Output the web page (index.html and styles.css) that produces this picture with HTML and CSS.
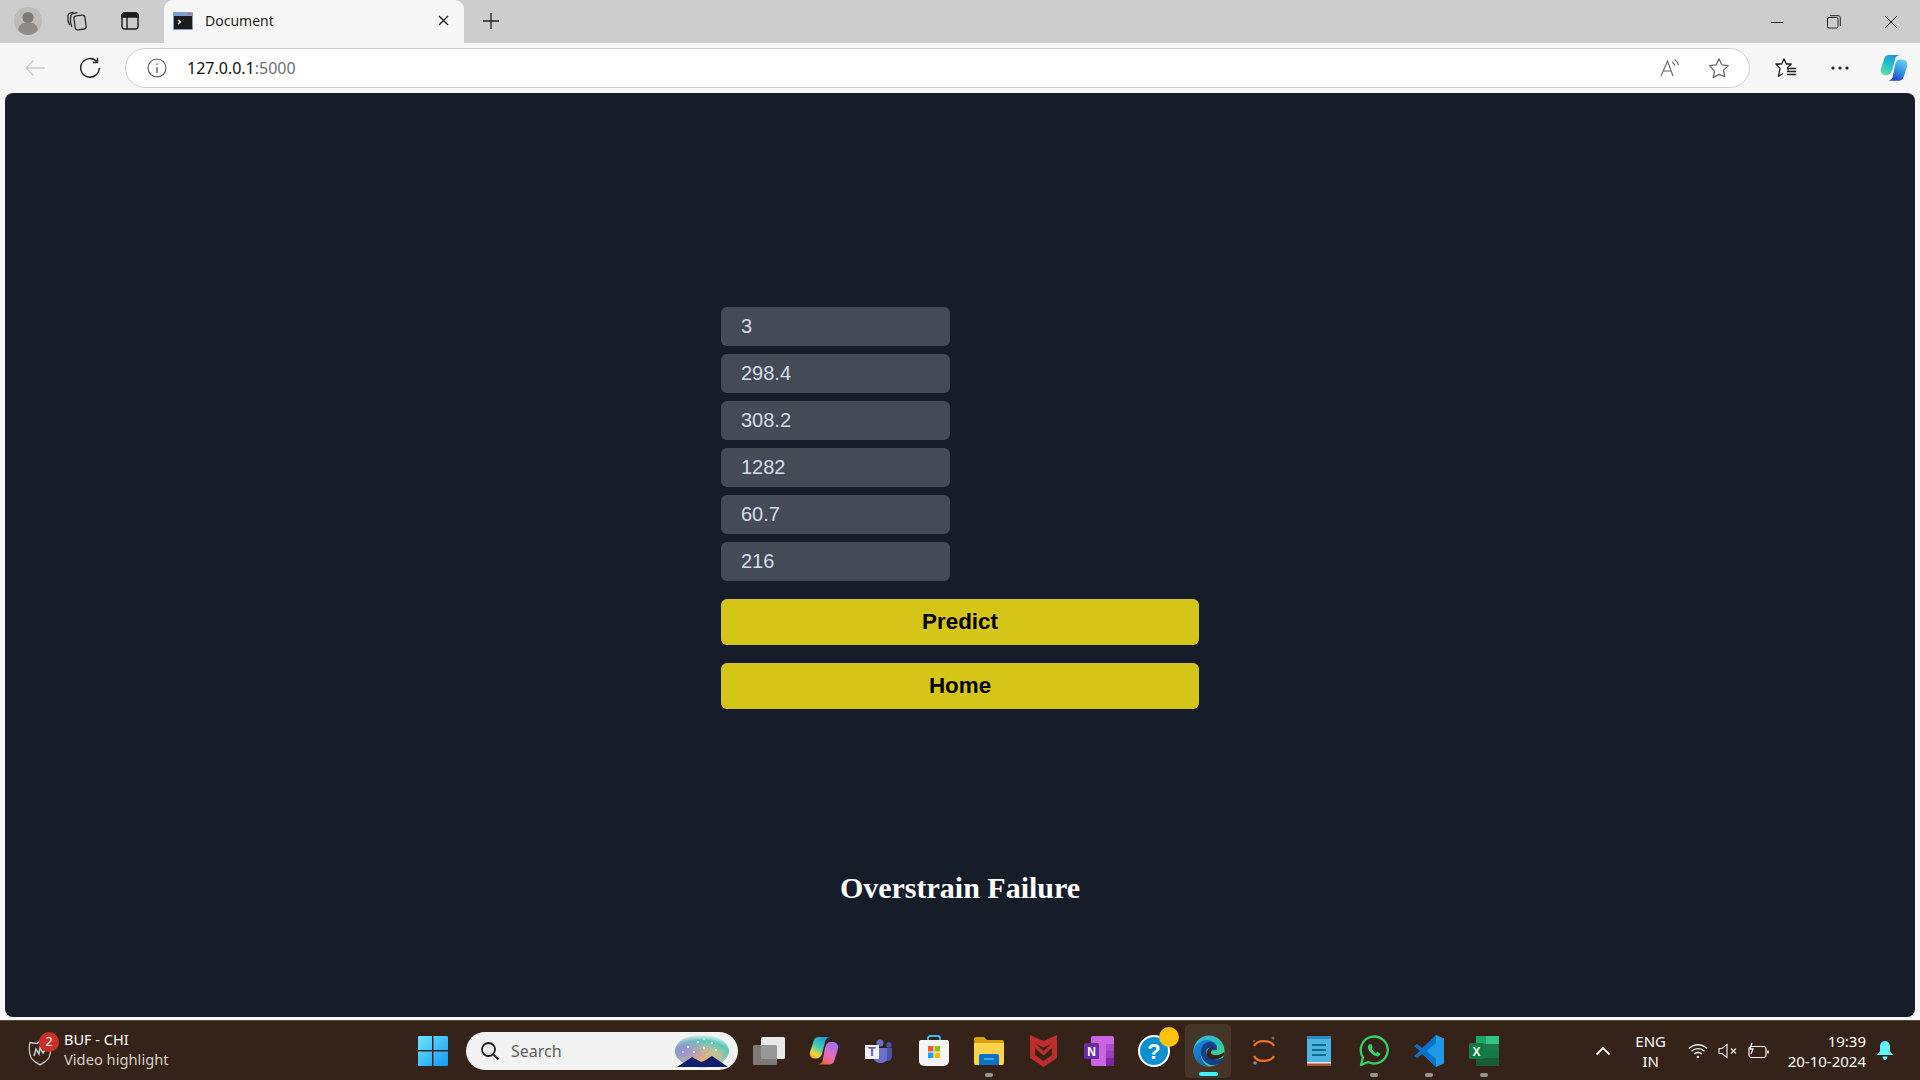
FILE: index.html
```html
<!DOCTYPE html>
<html lang="en">
<head>
<meta charset="utf-8">
<title>Document</title>
<link rel="stylesheet" href="styles.css">
</head>
<body>
<div class="app">
  <header class="tabstrip">
    <div class="strip-left">
      <span class="strip-btn">
        <svg width="28" height="28" viewBox="0 0 28 28"><circle cx="14" cy="14" r="14" fill="#bdbbb8"/><circle cx="14" cy="10.5" r="5.6" fill="#7c7a77"/><path d="M4 23c1-6 5-7.5 10-7.5s9 1.5 10 7.5c-2.500 3-6 5-10 5s-7.500-2-10-5z" fill="#8f8c88"/></svg>
      </span>
      <span class="strip-btn">
        <svg width="22" height="22" viewBox="0 0 22 22" fill="none" stroke="#2b2b2b" stroke-width="1.300"><rect x="8.500" y="5.500" width="11" height="14" rx="2.500" transform="rotate(-8 14 12)"/><path d="M6 17C4.500 14 4 10 5 5.500c.3-1.500 1.200-2 2.500-2.200l4-.6"/><path d="M3.500 15C2 12 1.500 9 2 5.500c.2-1.300 1-2 2-2.300l3.500-1"/></svg>
      </span>
      <span class="strip-btn">
        <svg width="18" height="18" viewBox="0 0 18 18" fill="none" stroke="#1c1c1c" stroke-width="1.400"><rect x="1" y="1" width="16" height="16" rx="2.500"/><path d="M1 3.500a2.500 2.500 0 0 1 2.500-2.500h11A2.500 2.500 0 0 1 17 3.500V5H1z" fill="#1c1c1c"/><path d="M6 5v12"/></svg>
      </span>
    </div>
    <div class="tab">
      <svg class="favicon" width="20" height="18" viewBox="0 0 20 18"><rect width="20" height="18" rx="1" fill="#7a9fd0"/><rect x="1" y="4" width="18" height="13" fill="#1b1b1b"/><rect x="14" y="1.200" width="4" height="1.600" fill="#d96a5f"/><path d="M5 8l2.500 2L5 12" fill="none" stroke="#fff" stroke-width="1.200"/></svg>
      <span class="tab-title">Document</span>
      <svg class="tab-close" width="11" height="11" viewBox="0 0 11 11" stroke="#1c1c1c" stroke-width="1.400"><path d="M1 1l9 9M10 1l-9 9"/></svg>
    </div>
    <span class="new-tab">
      <svg width="18" height="18" viewBox="0 0 18 18" stroke="#222" stroke-width="1.300"><path d="M9 1v16M1 9h16"/></svg>
    </span>
    <div class="window-controls">
      <span class="win-btn"><svg width="14" height="14" viewBox="0 0 14 14" stroke="#222" stroke-width="1"><path d="M1 7.500h12"/></svg></span>
      <span class="win-btn"><svg width="14" height="14" viewBox="0 0 14 14" fill="none" stroke="#222" stroke-width="1"><rect x=".5" y="2.500" width="10.500" height="10.500" rx="1.500"/><path d="M3 .7h8.300a2 2 0 0 1 2 2V11"/></svg></span>
      <span class="win-btn"><svg width="14" height="14" viewBox="0 0 14 14" stroke="#222" stroke-width="1"><path d="M1 1l12 12M13 1L1 13"/></svg></span>
    </div>
  </header>

  <nav class="toolbar">
    <span class="tool tool-back"><svg width="22" height="18" viewBox="0 0 22 18" fill="none" stroke="#c9c9c9" stroke-width="1.300"><path d="M21 9H2M9.500 1.500L2 9l7.500 7.500"/></svg></span>
    <span class="tool tool-reload"><svg width="22" height="22" viewBox="0 0 22 22" fill="none" stroke="#1f1f1f" stroke-width="1.400"><path d="M17.800 4.500A9.300 9.300 0 1 0 20.300 11"/><path d="M18.500 .8v4.700h-4.800"/></svg></span>
    <div class="omnibox">
      <svg class="omni-info" width="20" height="20" viewBox="0 0 20 20" fill="none" stroke="#555" stroke-width="1.100"><circle cx="10" cy="10" r="9"/><path d="M10 9v6" stroke-width="1.300"/><path d="M10 5.500v1.300" stroke-width="1.400"/></svg>
      <span class="url">127.0.0.1<span class="url-port">:5000</span></span>
      <span class="omni-actions">
        <svg width="20" height="20" viewBox="0 0 20 20" fill="none" stroke="#6a6a6a" stroke-width="1.200"><path d="M1 18L7.500 3 13 18M3.300 13h8.200"/><path d="M12 4c1.500.8 2.500 2 3 3.700M14.500 1.500c2 1 3.300 2.800 4 5.500"/></svg>
        <svg width="22" height="22" viewBox="0 0 22 22" fill="none" stroke="#6a6a6a" stroke-width="1.300"><path d="M11 1.800l2.800 6 6.500.8-4.800 4.500 1.300 6.500L11 17.400l-5.800 3.200 1.300-6.500L1.700 8.600l6.500-.8z" stroke-linejoin="round"/></svg>
      </span>
    </div>
    <span class="tool tool-fav"><svg width="22" height="22" viewBox="0 0 22 22" fill="none" stroke="#1f1f1f" stroke-width="1.300"><path d="M9 1.800l2.300 5.200h5l-3.800 3.500 1 3M9 1.800L6.700 7H1l4 4.300-1.500 8 4.500-2.800" stroke-linejoin="round"/><path d="M12 11.500h9M12 14.500h9M12 17.500h9"/></svg></span>
    <span class="tool tool-more"><svg width="18" height="4" viewBox="0 0 18 4" fill="#1f1f1f"><circle cx="2" cy="2" r="1.600"/><circle cx="9" cy="2" r="1.600"/><circle cx="16" cy="2" r="1.600"/></svg></span>
    <span class="tool tool-copilot">
      <svg width="32" height="30" viewBox="0 0 32 32">
        <defs>
          <linearGradient id="cp1" x1=".7" y1="0" x2=".2" y2="1"><stop offset="0" stop-color="#1b94e8"/><stop offset=".5" stop-color="#22bfc8"/><stop offset="1" stop-color="#5fe0a0"/></linearGradient>
          <linearGradient id="cp2" x1=".8" y1="0" x2=".3" y2="1"><stop offset="0" stop-color="#6fd0f5"/><stop offset=".55" stop-color="#2f8fe8"/><stop offset="1" stop-color="#1c3fc8"/></linearGradient>
        </defs>
        <path d="M10.500 2H23c-2.200 0-4.700 1.200-5.500 3.400L14 19c-.8 2.400-3.300 4.500-5.700 4.500H6.500C3 23.500 1 20 2 17L6 5c.7-2 2.400-3 4.500-3z" fill="url(#cp1)"/>
        <path d="M21.500 29.500H9.500c2.200 0 4.200-1.200 5-3.400L17 13c.8-2.400 2.300-6 4.700-6h3.800c3.500 0 5.500 4 4.500 7l-4 12.500c-.7 2-2.400 3-4.500 3z" fill="url(#cp2)"/>
      </svg>
    </span>
  </nav>

  <main class="webview">
    <form class="predict-form">
      <input class="field" type="text" value="3">
      <input class="field" type="text" value="298.4">
      <input class="field" type="text" value="308.2">
      <input class="field" type="text" value="1282">
      <input class="field" type="text" value="60.7">
      <input class="field" type="text" value="216">
      <button class="action action-first" type="button">Predict</button>
      <button class="action" type="button">Home</button>
    </form>
    <h2 class="result">Overstrain Failure</h2>
  </main>

  <footer class="taskbar">
    <div class="news">
      <span class="news-icon">
        <svg width="24" height="26" viewBox="0 0 24 26" fill="none" stroke="#c9c9c9" stroke-width="1.300"><path d="M12 1l3 2.500 7-1c1 4 1 10-1 15-1.500 3-5 5-9 7.500-4-2.500-7.500-4.500-9-7.500-2-5-2-11-1-15l7 1z"/><path d="M6 16l2-7 3 5 1-6 3 5 3-5" stroke-width="1.500"/></svg>
        <span class="news-badge">2</span>
      </span>
      <span class="news-text">
        <span class="news-title">BUF - CHI</span>
        <span class="news-sub">Video highlight</span>
      </span>
    </div>
    <svg class="start" width="30" height="30" viewBox="0 0 30 30">
      <defs><linearGradient id="win" x1="0" y1="0" x2="1" y2="1"><stop offset="0" stop-color="#6fe6fb"/><stop offset="1" stop-color="#0f98f5"/></linearGradient></defs>
      <path d="M0 1a1 1 0 0 1 1-1h13v14H0zM15.500 0H29a1 1 0 0 1 1 1v13H15.500zM0 15.500h14V30H1a1 1 0 0 1-1-1zM15.500 15.500H30V29a1 1 0 0 1-1 1H15.500z" fill="url(#win)"/>
    </svg>
    <div class="search">
      <svg width="20" height="20" viewBox="0 0 20 20" fill="none" stroke="#1e1e1e" stroke-width="1.800"><circle cx="8.500" cy="8.500" r="6.500"/><path d="M13.500 13.500L18.500 18.500"/></svg>
      <span class="search-label">Search</span>
      <svg class="search-art" width="56" height="34" viewBox="0 0 56 34">
        <defs>
          <radialGradient id="sky" cx=".5" cy=".75" r=".75"><stop offset="0" stop-color="#f7b36b"/><stop offset=".45" stop-color="#b9c29a"/><stop offset=".75" stop-color="#55c9bb"/><stop offset="1" stop-color="#f3f3f3"/></radialGradient>
          <radialGradient id="sky2" cx=".15" cy=".5" r=".5"><stop offset="0" stop-color="#9a8fd6"/><stop offset="1" stop-color="#9a8fd6" stop-opacity="0"/></radialGradient>
        </defs>
        <ellipse cx="28" cy="17" rx="27" ry="16.500" fill="url(#sky)"/>
        <ellipse cx="28" cy="17" rx="27" ry="16.500" fill="url(#sky2)"/>
        <path d="M3 33l15-10 9 5 3-1 8-5 16 11z" fill="#0f1f6e"/>
        <g fill="#fff"><circle cx="14" cy="13" r="1"/><circle cx="24" cy="8" r="1"/><circle cx="30" cy="14" r="1.200"/><circle cx="38" cy="9" r="1"/><circle cx="20" cy="18" r="1"/><circle cx="42" cy="16" r="1"/><circle cx="30" cy="5" r=".8"/><circle cx="9" cy="18" r=".8"/></g>
      </svg>
    </div>
    <div class="apps">
      <span class="slot">
        <svg width="32" height="28" viewBox="0 0 32 28"><rect x="8" y="0" width="24" height="22" rx="1.500" fill="#e8e8e8"/><rect x="0" y="8" width="24" height="20" rx="1.500" fill="#8a8a8a" opacity=".85"/></svg>
      </span>
      <span class="slot">
        <svg width="32" height="32" viewBox="0 0 32 32">
          <defs>
            <linearGradient id="ms1" x1=".8" y1="0" x2=".1" y2="1"><stop offset="0" stop-color="#1e8fe8"/><stop offset=".5" stop-color="#3fd0b0"/><stop offset=".8" stop-color="#f6d33b"/><stop offset="1" stop-color="#f0a030"/></linearGradient>
            <linearGradient id="ms2" x1=".8" y1="0" x2=".2" y2="1"><stop offset="0" stop-color="#9a6ff0"/><stop offset=".55" stop-color="#e86cc0"/><stop offset="1" stop-color="#f2602c"/></linearGradient>
          </defs>
          <path d="M10.500 2H23c-2.200 0-4.700 1.200-5.500 3.400L14 19c-.8 2.400-3.300 4.500-5.700 4.500H6.500C3 23.500 1 20 2 17L6 5c.7-2 2.400-3 4.500-3z" fill="url(#ms1)"/>
          <path d="M21.500 29.500H9.500c2.200 0 4.200-1.200 5-3.400L17 13c.8-2.400 2.300-6 4.700-6h3.800c3.500 0 5.500 4 4.500 7l-4 12.500c-.7 2-2.400 3-4.500 3z" fill="url(#ms2)"/>
        </svg>
      </span>
      <span class="slot">
        <svg width="28" height="24" viewBox="0 0 28 24"><circle cx="15" cy="4" r="3.500" fill="#6b6fd0"/><circle cx="24" cy="6" r="2.700" fill="#4f53a8"/><path d="M19 9h8v8c0 3-2 5-4.500 5H20z" fill="#4f53a8"/><path d="M8 9h14v10a5 5 0 0 1-5 5h-2a7 7 0 0 1-7-7z" fill="#6b6fd0"/><rect y="6" width="14" height="14" fill="#f3f3f3"/><text class="teams-t" x="7" y="17">T</text></svg>
      </span>
      <span class="slot">
        <svg width="30" height="32" viewBox="0 0 30 32"><path d="M9 6V3a2 2 0 0 1 2-2h8a2 2 0 0 1 2 2v3" fill="none" stroke="#38bdf8" stroke-width="1.800"/><path d="M0 7a2 2 0 0 1 2-2h26a2 2 0 0 1 2 2v19a5 5 0 0 1-5 5H5a5 5 0 0 1-5-5z" fill="#f4f4f4"/><rect x="9" y="11" width="5.500" height="5.500" fill="#ef5a28"/><rect x="15.500" y="11" width="5.500" height="5.500" fill="#8cc121"/><rect x="9" y="17.500" width="5.500" height="5.500" fill="#19a5ee"/><rect x="15.500" y="17.500" width="5.500" height="5.500" fill="#fbbd0d"/></svg>
      </span>
      <span class="slot slot-run">
        <svg width="30" height="29" viewBox="0 0 30 29"><path d="M0 3a2 2 0 0 1 2-2h8l3 3h15a2 2 0 0 1 2 2v6H0z" fill="#d79f10"/><path d="M0 7h30v20a2 2 0 0 1-2 2H2a2 2 0 0 1-2-2z" fill="#fcd34d"/><path d="M5 20a2 2 0 0 1 2-2h16a2 2 0 0 1 2 2v9H5z" fill="#0c72c9"/><path d="M10 23h10" stroke="#7fc2f2" stroke-width="1.200"/></svg>
      </span>
      <span class="slot">
        <svg width="27" height="32" viewBox="0 0 27 32"><path d="M0 0l13.500 6L27 0v23l-13.500 9L0 23z" fill="#bd2d2d"/><path d="M5 8.500l8.500 4 8.500-4V20l-8.500 6L5 20z" fill="#35231a"/><path d="M5 8l8.500 8L22 8v5l-8.500 7.500L5 13z" fill="#bd2d2d"/></svg>
      </span>
      <span class="slot">
        <svg width="30" height="30" viewBox="0 0 30 30"><rect x="7" y="0" width="23" height="30" rx="2" fill="#c866e4"/><rect x="22" y="8" width="8" height="7" fill="#a94fcb"/><rect x="22" y="15" width="8" height="7" fill="#9a3fbd"/><path d="M22 22h8v6a2 2 0 0 1-2 2h-6z" fill="#7e26a2"/><rect x="0" y="7" width="15" height="16" rx="1.500" fill="#6a2d9f"/><text class="onenote-n" x="7.500" y="19.500">N</text></svg>
      </span>
      <span class="slot">
        <svg width="32" height="32" viewBox="0 0 32 32"><circle cx="16" cy="16" r="15" fill="#0f8fd0" stroke="#fff" stroke-width="2"/><text class="help-q" x="16" y="24">?</text></svg>
        <span class="help-dot"></span>
      </span>
      <span class="slot slot-active">
        <svg width="32" height="32" viewBox="0 0 32 32">
          <defs><linearGradient id="edge1" x1="0" y1="0" x2="1" y2="1"><stop offset="0" stop-color="#2fb6ec"/><stop offset=".6" stop-color="#31c6a4"/><stop offset="1" stop-color="#7ddc5c"/></linearGradient><linearGradient id="edge2" x1="0" y1="0" x2="1" y2="1"><stop offset="0" stop-color="#1f8fe0"/><stop offset="1" stop-color="#0c4ea8"/></linearGradient></defs>
          <circle cx="16" cy="16" r="15.500" fill="url(#edge1)"/>
          <path d="M16 31.500C7.500 31.500.5 24.500.5 16 2 9 8 5 14 5c6 0 10 4 10 7 0 2-1.500 3.500-4 3.500-2 0-3-1.200-3-2.500-1-.7-2.500-1-4-.5-3.500 1-5.500 4.500-5 8.500.5 5 4 9 8 10.500z" fill="url(#edge2)"/>
          <path d="M13 17c0-2.500 2-4.500 4.500-4.500 2 0 3 1.200 3 2.500h3.500C24 9.500 20 6 15.500 7 9 8.500 8 14 8 18c0 6 5 11 10 12 6 1 11-2 13-8-3 2-7 3-10 2-5-1-8-3.500-8-7z" fill="#123f8f"/>
          <path d="M13.500 18.500c0 3.500 3 6 7 6 4 0 8-1.500 10.500-4.500l.3-3c-3 2.500-7 3.500-10.300 3-2-.3-3-1-3-2.500 0-2.500 2-3.500 3-5-1.500-1.500-7.500 1-7.500 6z" fill="#35231a"/>
        </svg>
      </span>
      <span class="slot">
        <svg width="26" height="32" viewBox="0 0 26 32" fill="none"><path d="M3 11C6 4.500 20 4.500 23 11" stroke="#f26f21" stroke-width="2.200"/><path d="M3 21c3 6.500 17 6.500 20 0" stroke="#f26f21" stroke-width="2.200"/><circle cx="22" cy="3" r="1.500" fill="#6d6d6d"/><circle cx="3" cy="6" r="1" fill="#777"/><circle cx="4" cy="28" r="1.800" fill="#8a8a8a"/></svg>
      </span>
      <span class="slot">
        <svg width="24" height="32" viewBox="0 0 24 32"><rect y="2" width="24" height="26" fill="#4db4e2"/><path d="M0 28h24v3H0z" fill="#a6562e"/><path d="M0 27h24v1.500H0z" fill="#e8e8e8"/><rect y="1" width="24" height="3" fill="#2a8dc0"/><path d="M5 10h14M5 15h14M5 20h14" stroke="#13698f" stroke-width="2"/></svg>
      </span>
      <span class="slot slot-run">
        <svg width="30" height="32" viewBox="0 0 30 32" fill="none"><path d="M2 30l2-7.500A13.500 13.500 0 1 1 9 27z" stroke="#2fd366" stroke-width="2.300" stroke-linejoin="round"/><path d="M10 9.500c-1.500 1.500-1.500 3.500 0 6 2 3 4.500 5 7.500 5.800 2 .5 3.800-.8 4-2.500l-3.200-2-1.500 1.200c-1.800-1-3.300-2.500-4.200-4.300l1.200-1.500-1.500-3.200z" fill="#2fd366"/></svg>
      </span>
      <span class="slot slot-run">
        <svg width="30" height="32" viewBox="0 0 30 32"><path d="M22 0l8 3.500v25L22 32 9 19z" fill="#1f9ae8"/><path d="M22 0L6 15l3 4L22 8z" fill="#0a73c7"/><path d="M22 32L6 17l3-4 13 11z" fill="#0a73c7"/><path d="M0 11l3-2 9 7-9 7-3-2 6-5z" fill="#0a73c7"/></svg>
      </span>
      <span class="slot slot-run">
        <svg width="30" height="30" viewBox="0 0 30 30"><rect x="7" width="23" height="30" rx="2" fill="#1f7a4c"/><rect x="17" width="13" height="8" fill="#33c481"/><rect x="7" width="10" height="8" fill="#21a366"/><rect x="17" y="15" width="13" height="8" fill="#107c41"/><rect x="7" y="22" width="23" height="8" fill="#185c37"/><rect y="7" width="15" height="16" rx="1.500" fill="#107c41"/><text class="excel-x" x="7.500" y="19.500">X</text></svg>
      </span>
    </div>
    <div class="tray">
      <svg class="tray-up" width="16" height="10" viewBox="0 0 16 10" fill="none" stroke="#f2f2f2" stroke-width="1.800"><path d="M1.500 8.500L8 2l6.500 6.500"/></svg>
      <span class="lang"><span>ENG</span><span>IN</span></span>
      <span class="tray-icons">
        <svg width="20" height="16" viewBox="0 0 20 16" fill="none" stroke="#f2f2f2" stroke-width="1.300"><path d="M1 5.500c5-5 13-5 18 0M3.500 8.300c3.500-3.500 9.500-3.500 13 0M6.200 11c2-2 5.600-2 7.600 0"/><circle cx="10" cy="14" r="1.300" fill="#f2f2f2" stroke="none"/></svg>
        <svg width="20" height="16" viewBox="0 0 20 16" fill="none" stroke="#e6e6e6" stroke-width="1.200"><path d="M1 5.500h3L9 1.500v13L4 10.500H1z"/><path d="M13 5.500l5 5M18 5.500l-5 5"/></svg>
        <svg width="21" height="16" viewBox="0 0 21 16" fill="none" stroke="#f2f2f2" stroke-width="1.200"><rect x="1" y="3.500" width="17" height="11" rx="2.500"/><path d="M20 7.500v3" stroke-width="1.600"/><path d="M4 0L2 6h3l-2 5" stroke-width="1.300"/></svg>
      </span>
      <span class="clock"><span>19:39</span><span>20-10-2024</span></span>
      <svg class="bell" width="16" height="19" viewBox="0 0 16 19" fill="#65f3fb"><path d="M8 0c3.500 0 5 3 5 6v4l3 4H0l3-4V6c0-3 1.500-6 5-6z"/><path d="M5.500 15.500h5C10.300 17.500 9.300 19 8 19s-2.300-1.500-2.500-3.500z"/></svg>
    </div>
  </footer>
</div>
</body>
</html>
```
FILE: styles.css
```css
* { box-sizing: border-box; }
html, body { margin: 0; height: 100%; }
body { font-family: "Noto Sans", "Open Sans", sans-serif; overflow: hidden; background: #f7f7f7; }
.app { display: flex; flex-direction: column; height: 1080px; }

/* Tab strip */
.tabstrip { height: 43px; flex: none; display: flex; align-items: stretch; background: #cdcdcd; }
.strip-left { display: flex; align-items: center; width: 164px; flex: none; }
.strip-btn { display: flex; align-items: center; justify-content: center; padding-bottom: 1px; }
.strip-btn:nth-child(1) { width: 56px; }
.strip-btn:nth-child(2) { width: 42px; }
.strip-btn:nth-child(3) { width: 64px; }
.tab { width: 300px; flex: none; display: flex; align-items: center; background: #f7f7f7; border-radius: 9px 9px 0 0; padding: 0 15px 2px 9px; }
.favicon { flex: none; }
.tab-title { margin-left: 12px; font-size: 14px; color: #1c1c1c; flex: 1; }
.tab-close { flex: none; }
.new-tab { width: 54px; display: flex; align-items: center; justify-content: center; padding-bottom: 2px; }
.window-controls { margin-left: auto; display: flex; align-items: center; padding-right: 1px; }
.win-btn { width: 57px; display: flex; align-items: center; justify-content: center; }

/* Toolbar */
.toolbar { height: 50px; flex: none; display: flex; align-items: center; background: #f7f7f7; }
.tool { display: flex; align-items: center; justify-content: center; flex: none; }
.tool-back { width: 70px; }
.tool-reload { width: 40px; margin-right: 15px; }
.omnibox { width: 1625px; height: 40px; flex: none; display: flex; align-items: center; background: #fff; border: 1px solid #cfcfcf; border-radius: 20px; padding: 0 19px 0 21px; }
.omni-info { flex: none; }
.url { margin-left: 20px; font-size: 16px; color: #111; }
.url-port { color: #6f6f6f; }
.omni-actions { margin-left: auto; display: flex; align-items: center; gap: 28px; }
.tool-fav { width: 72px; }
.tool-more { width: 36px; }
.tool-copilot { width: 71px; }

/* Page */
.webview { flex: 1; margin: 0 5px 3px; background: #161c28; border-radius: 8px; padding-top: 214px; }
.predict-form { width: 478px; margin: 0 auto; display: flex; flex-direction: column; }
.field { width: 229px; height: 39px; margin-bottom: 8px; padding: 0 20px; border: 0; border-radius: 6px; background: #454b56; color: #d6dcea; font-family: "Liberation Sans", Arial, sans-serif; font-size: 20px; outline: 0; }
.action { height: 46px; margin-bottom: 18px; border: 0; border-radius: 6px; background: #d6c519; color: #000; font-family: "Liberation Sans", Arial, sans-serif; font-weight: 700; font-size: 22.4px; padding: 0 0 1px; }
.action-first { margin-top: 10px; }
.result { margin: 145px 0 0; text-align: center; color: #fff; font-family: "Liberation Serif", "Times New Roman", serif; font-weight: 700; font-size: 30px; line-height: 32px; }

/* Taskbar */
.taskbar { height: 60px; flex: none; display: flex; align-items: center; background: #35231a; border-top: 1px solid #5b4c43; color: #fff; }
.news { width: 418px; flex: none; display: flex; align-items: center; padding-left: 28px; }
.news-icon { position: relative; width: 36px; height: 30px; display: flex; align-items: flex-end; flex: none; }
.news-badge { position: absolute; left: 11px; top: -4px; width: 20px; height: 20px; border-radius: 50%; background: #cc2e26; color: #fff; font-size: 12.500px; line-height: 20px; text-align: center; }
.news-text { display: flex; flex-direction: column; line-height: 20px; padding-bottom: 4px; }
.news-title { font-size: 14.500px; color: #fff; }
.news-sub { font-size: 14.700px; color: #d5cfca; }
.start { flex: none; margin-right: 18px; }
.search { width: 272px; height: 38px; flex: none; display: flex; align-items: center; padding: 0 8px 0 14px; border-radius: 19px; background: #f3f3f3; }
.search-label { margin-left: 11px; font-size: 16px; color: #5e5e5e; }
.search-art { margin-left: auto; }
.apps { display: flex; align-items: center; padding-left: 3px; }
.slot { position: relative; width: 55px; height: 54px; display: flex; align-items: center; justify-content: center; }
.slot-run::after { content: ""; position: absolute; left: 23.500px; bottom: 1px; width: 8px; height: 4px; border-radius: 2px; background: #9a9590; }
.slot-active::before { content: ""; position: absolute; left: 4px; right: 5px; top: 0; bottom: 0; border-radius: 5px; background: #463529; z-index: 0; }
.slot-active svg { position: relative; z-index: 1; }
.slot-active::after { content: ""; position: absolute; left: 18px; bottom: 2px; width: 19px; height: 4px; border-radius: 2px; background: #3ff0fa; }
.help-dot { position: absolute; left: 33px; top: 3px; width: 20px; height: 20px; border-radius: 50%; background: #ffc20e; }
.teams-t, .onenote-n, .excel-x, .help-q { font-family: "Liberation Sans", Arial, sans-serif; font-weight: 700; text-anchor: middle; }
.teams-t { font-size: 12px; fill: #5059c9; }
.onenote-n { font-size: 12px; fill: #fff; }
.excel-x { font-size: 12px; fill: #fff; }
.help-q { font-size: 22px; fill: #fff; }
.tray { margin-left: auto; display: flex; align-items: center; padding-right: 27px; }
.tray-up { flex: none; margin-right: 18px; }
.lang { width: 44px; display: flex; flex-direction: column; align-items: center; font-size: 15px; line-height: 20px; margin-right: 15px; }
.tray-icons { display: flex; align-items: center; gap: 10px; margin-right: 19px; }
.clock { display: flex; flex-direction: column; align-items: flex-end; font-size: 15px; line-height: 20px; margin-right: 11px; }
.bell { flex: none; }
```
